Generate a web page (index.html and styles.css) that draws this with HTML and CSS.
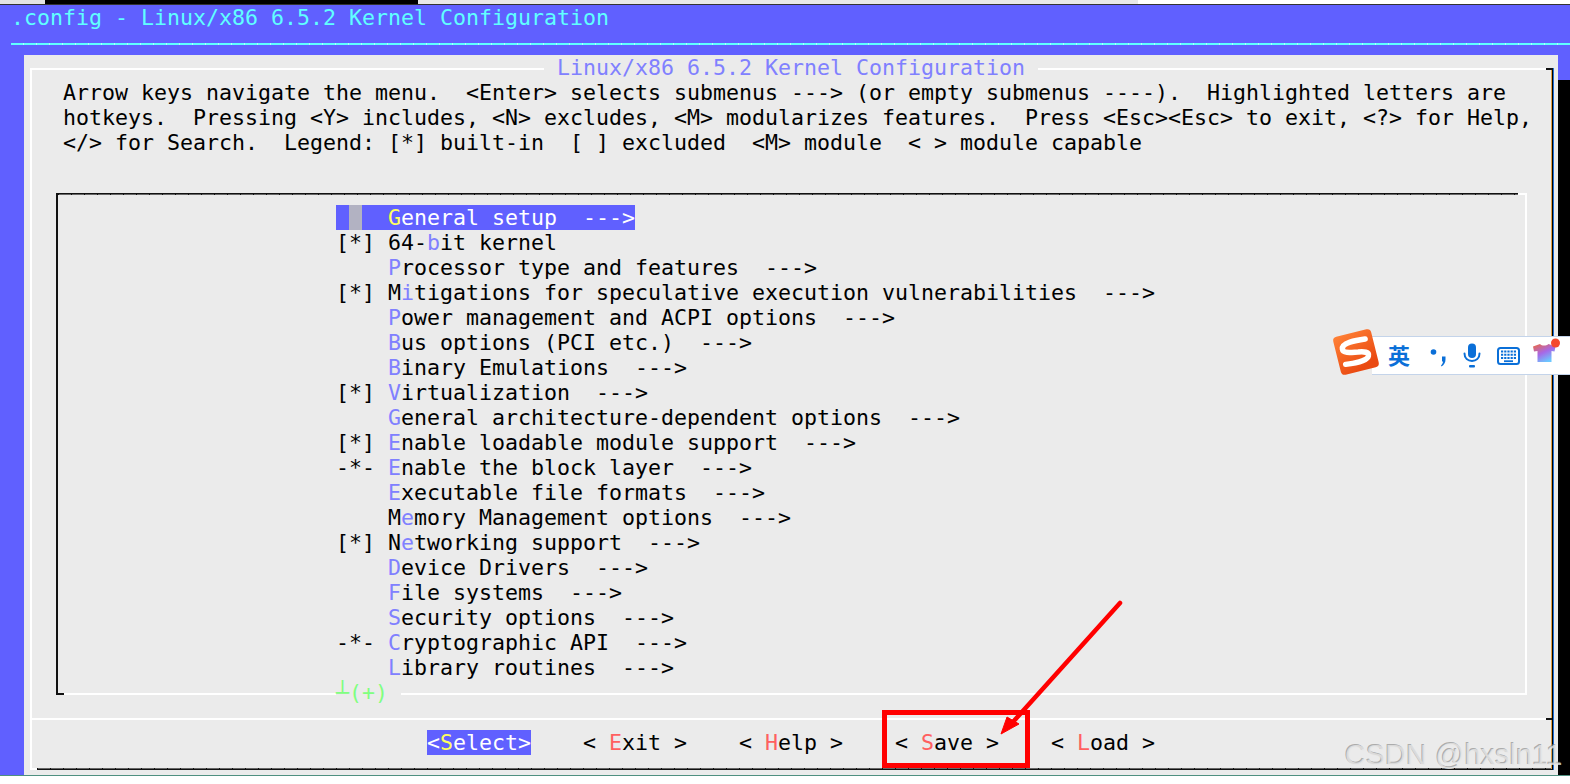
FILE: index.html
```html
<!DOCTYPE html>
<html lang="en">
<head>
<meta charset="utf-8">
<title>Linux/x86 6.5.2 Kernel Configuration</title>
<link rel="stylesheet" href="styles.css">
</head>
<body>
<div class="app">
  <div class="tabstrip">
    <div class="tab-gray-left"></div>
    <div class="tab-black"></div>
    <div class="tab-gray-right"></div>
    <div class="tab-white"></div>
  </div>
  <div class="screen">
    <div class="title">.config - Linux/x86 6.5.2 Kernel Configuration</div>
    <div class="rule"></div>
    <div class="row">
      <div class="dialog">
        <div class="frame">
          <div class="legend"> Linux/x86 6.5.2 Kernel Configuration </div>
          <div class="help">Arrow keys navigate the menu.  &lt;Enter&gt; selects submenus ---&gt; (or empty submenus ----).  Highlighted letters are
hotkeys.  Pressing &lt;Y&gt; includes, &lt;N&gt; excludes, &lt;M&gt; modularizes features.  Press &lt;Esc&gt;&lt;Esc&gt; to exit, &lt;?&gt; for Help,
&lt;/&gt; for Search.  Legend: [*] built-in  [ ] excluded  &lt;M&gt; module  &lt; &gt; module capable</div>
          <div class="menubox">
            <div class="item selected"> <span class="cursor"> </span>  <span class="hk-sel">G</span>eneral setup  ---&gt;</div>
            <div class="item">[*] 64-<span class="hk">b</span>it kernel</div>
            <div class="item">    <span class="hk">P</span>rocessor type and features  ---&gt;</div>
            <div class="item">[*] M<span class="hk">i</span>tigations for speculative execution vulnerabilities  ---&gt;</div>
            <div class="item">    <span class="hk">P</span>ower management and ACPI options  ---&gt;</div>
            <div class="item">    <span class="hk">B</span>us options (PCI etc.)  ---&gt;</div>
            <div class="item">    <span class="hk">B</span>inary Emulations  ---&gt;</div>
            <div class="item">[*] <span class="hk">V</span>irtualization  ---&gt;</div>
            <div class="item">    <span class="hk">G</span>eneral architecture-dependent options  ---&gt;</div>
            <div class="item">[*] <span class="hk">E</span>nable loadable module support  ---&gt;</div>
            <div class="item">-*- <span class="hk">E</span>nable the block layer  ---&gt;</div>
            <div class="item">    <span class="hk">E</span>xecutable file formats  ---&gt;</div>
            <div class="item">    M<span class="hk">e</span>mory Management options  ---&gt;</div>
            <div class="item">[*] N<span class="hk">e</span>tworking support  ---&gt;</div>
            <div class="item">    <span class="hk">D</span>evice Drivers  ---&gt;</div>
            <div class="item">    <span class="hk">F</span>ile systems  ---&gt;</div>
            <div class="item">    <span class="hk">S</span>ecurity options  ---&gt;</div>
            <div class="item">-*- <span class="hk">C</span>ryptographic API  ---&gt;</div>
            <div class="item">    <span class="hk">L</span>ibrary routines  ---&gt;</div>
            <div class="more">┴(+) </div>
          </div>
          <div class="separator"></div>
          <div class="buttons">
            <div class="btn btn-active">&lt;<span class="hk-sel">S</span>elect&gt;</div>
            <div class="btn">&lt; <span class="hk-btn">E</span>xit &gt;</div>
            <div class="btn">&lt; <span class="hk-btn">H</span>elp &gt;</div>
            <div class="btn">&lt; <span class="hk-btn">S</span>ave &gt;</div>
            <div class="btn">&lt; <span class="hk-btn">L</span>oad &gt;</div>
          </div>
        </div>
      </div>
      <div class="void"></div>
    </div>
  </div>
  <div class="footer"></div>

  <div class="ime">
    <svg class="ime-logo" width="52" height="52" viewBox="0 0 52 52" aria-hidden="true">
      <defs>
        <linearGradient id="logoFill" x1="0" y1="0" x2="0.4" y2="1">
          <stop offset="0" stop-color="#ff8136"/>
          <stop offset="1" stop-color="#ea4a12"/>
        </linearGradient>
      </defs>
      <g transform="rotate(-14 26 26)">
        <rect x="6.500" y="6.500" width="39" height="39" rx="4" fill="url(#logoFill)"/>
        <path d="M38 15.500C29 14.500 14 13.500 13.500 20C13 25 24 25.500 28 26.500C34 27.500 39 29 37 33C34.500 37.500 20 36.500 13 35.500" fill="none" stroke="#fff" stroke-width="5.500" stroke-linecap="round"/>
      </g>
    </svg>
    <span class="ime-lang">英</span>
    <svg class="ime-punct" width="16" height="20" viewBox="0 0 16 20" aria-hidden="true">
      <circle cx="3.500" cy="5" r="2.800" fill="#0a6fd8"/>
      <path d="M12 9.500h3.500v3C15.500 15.500 14 18 11.500 19.500L11 18.500C12.300 17.300 13 16 13 14.500h-1z" fill="#0a6fd8"/>
    </svg>
    <svg class="ime-mic" width="18" height="25" viewBox="0 0 18 25" aria-hidden="true">
      <rect x="5" y="0.500" width="8" height="14.500" rx="4" fill="#0a6fd8"/>
      <path d="M1.500 10.500C1.500 15.500 5 18 9 18s7.500-2.500 7.500-7.500" fill="none" stroke="#0a6fd8" stroke-width="2" stroke-linecap="round"/>
      <rect x="6" y="22" width="6" height="2.500" rx="1" fill="#0a6fd8"/>
    </svg>
    <svg class="ime-keys" width="23" height="18" viewBox="0 0 23 18" aria-hidden="true">
      <rect x="1" y="1" width="21" height="16" rx="2.500" fill="none" stroke="#0a6fd8" stroke-width="2"/>
      <path d="M4 4.500h15M4 7.800h15M4 11h15" stroke="#0a6fd8" stroke-width="2" stroke-dasharray="2.200 1"/>
      <path d="M7 14.200h9" stroke="#0a6fd8" stroke-width="1.800"/>
    </svg>
    <svg class="ime-shirt" width="30" height="30" viewBox="0 0 30 30" aria-hidden="true">
      <defs>
        <linearGradient id="shirtFill" x1="0" y1="0" x2="0.6" y2="1">
          <stop offset="0" stop-color="#f0683a"/>
          <stop offset="0.55" stop-color="#a668e8"/>
          <stop offset="1" stop-color="#6cc8ff"/>
        </linearGradient>
      </defs>
      <path d="M1 8.500L8 6C10 8 14 8 16.500 6L23.500 8.500L22.500 13.500L19.500 13V24H5.500V13L2 13.500z" fill="url(#shirtFill)"/>
      <circle cx="23.500" cy="5" r="4.500" fill="#f4492e"/>
    </svg>
  </div>

  <div class="callout-box"></div>
  <svg class="callout-arrow" width="140" height="150" viewBox="0 0 140 150" aria-hidden="true">
    <path d="M130 8L22 128" stroke="#ff0000" stroke-width="4.500" stroke-linecap="round" fill="none"/>
    <path d="M11 139L17 122L29 129z" fill="#ff0000" stroke="#ff0000" stroke-width="1"/>
  </svg>
  <div class="watermark">CSDN @hxsln11</div>
</div>
</body>
</html>
```
FILE: styles.css
```css
* { box-sizing: border-box; }

html, body {
  margin: 0;
  padding: 0;
  background: #fff;
}

.app {
  position: relative;
  width: 1570px;
  height: 784px;
  overflow: hidden;
  font-family: "DejaVu Sans Mono", "Liberation Mono", monospace;
  font-size: 21.6px;
  line-height: 25px;
  color: #000;
}

.title, .legend, .help, .item, .more, .btn { white-space: pre; }

/* window chrome sliver above the terminal */
.tabstrip {
  display: flex;
  height: 5px;
  border-bottom: 1px solid #333;
}
.tab-gray-left { width: 45px; background: #e4e4e4; }
.tab-black { width: 373px; background: #000; }
.tab-gray-right { width: 720px; background: #e8e8e8; }
.tab-white { flex: 1; background: #fff; }

.screen {
  height: 770px;
  background: #6060ff;
  display: flex;
  flex-direction: column;
}

.title {
  height: 25px;
  padding-left: 11px;
  color: #60ffff;
}

.rule {
  height: 2px;
  margin: 13px 0 10px 11px;
  background: repeating-linear-gradient(90deg, #60ffff 0 12px, #b0ffff 12px 13px);
}

.row {
  flex: 1;
  display: flex;
  min-height: 0;
}

.dialog {
  width: 1534px;
  margin-left: 24px;
  padding: 13px 5px 5px 6px;
  background: #ebebeb;
}

.frame {
  position: relative;
  height: 702px;
  padding-top: 10px;
  border-top: 2px solid #fff;
  border-left: 2px solid #fff;
  border-right: 1px solid #000;
  border-bottom: 1px solid #111;
  background: repeating-linear-gradient(90deg, #111 0 1px, #666 1px 13px) 5px 100% / calc(100% - 5px) 1px no-repeat;
  box-shadow: inset -1px 0 0 #e2a24a, 1px 0 0 #1f6fd6;
}
.frame::before {
  content: "";
  position: absolute;
  top: -2px;
  right: -1px;
  width: 7px;
  height: 2px;
  background: #111;
}
.frame::after {
  content: "";
  position: absolute;
  bottom: -1px;
  left: -2px;
  width: 7px;
  height: 2px;
  background: #fff;
}

.legend {
  position: absolute;
  top: -15px;
  left: 512px;
  padding: 0;
  background: #ebebeb;
  color: #8080ff;
}

.help {
  height: 75px;
  padding-left: 31px;
}

.menubox {
  position: relative;
  width: 1471px;
  height: 502px;
  margin: 38px 0 0 24px;
  padding: 11px 0 13px 278px;
  border-top: 1px solid #111;
  border-left: 2px solid #111;
  border-right: 2px solid #fff;
  border-bottom: 2px solid #fff;
  background: repeating-linear-gradient(90deg, #111 0 1px, #666 1px 13px) 0 0 / calc(100% - 7px) 1px no-repeat;
}
.menubox::before {
  content: "";
  position: absolute;
  top: -1px;
  right: -2px;
  width: 9px;
  height: 2px;
  background: #fff;
}
.menubox::after {
  content: "";
  position: absolute;
  bottom: -2px;
  left: -2px;
  width: 8px;
  height: 2px;
  background: #111;
}

.item { height: 25px; }

.selected {
  width: fit-content;
  background: #6060ff;
  color: #fff;
}

.cursor { background: #b2b2c2; }

.hk { color: #8080ff; }
.hk-sel { color: #ffff60; }
.hk-btn { color: #ff6060; }

.more {
  position: absolute;
  top: 486px;
  left: 278px;
  background: #ebebeb;
  color: #80ff80;
}

.separator {
  position: relative;
  height: 2px;
  margin-top: 23px;
  background: #fff;
}
.separator::after {
  content: "";
  position: absolute;
  top: 0;
  right: 0;
  width: 6px;
  height: 2px;
  background: #111;
}

.buttons {
  display: flex;
  gap: 52px;
  padding: 10px 0 0 395px;
}
.btn { width: 104px; height: 25px; }
.btn-active {
  background: #6060ff;
  color: #fff;
}

.void {
  flex: 1;
  margin-top: 25px;
  background: #000;
}

.footer {
  height: 1px;
  background: #4f9080;
}

/* input method toolbar floating over the terminal */
.ime {
  position: absolute;
  top: 336px;
  left: 1372px;
  width: 198px;
  height: 39px;
  display: flex;
  align-items: center;
  background: #fff;
  border-top: 1px solid #c4d4ea;
  border-bottom: 1px solid #c4d4ea;
  font-family: "Noto Sans CJK SC", sans-serif;
}
.ime-logo {
  position: absolute;
  top: -11px;
  left: -42px;
}
.ime-lang {
  margin: -4px 0 0 16px;
  font-size: 22px;
  font-weight: 700;
  line-height: 24px;
  color: #0a6fd8;
}
.ime-punct { margin: 2px 0 0 20px; }
.ime-mic { margin: 0 0 0 17px; }
.ime-keys { margin: 1px 0 0 16px; }
.ime-shirt { position: absolute; top: 1px; left: 160px; }

.callout-box {
  position: absolute;
  top: 710px;
  left: 882px;
  width: 148px;
  height: 58px;
  border: 5px solid #ff0000;
}

.callout-arrow {
  position: absolute;
  top: 595px;
  left: 990px;
}

.watermark {
  position: absolute;
  top: 737px;
  left: 1345px;
  font-family: "Liberation Sans", Arial, sans-serif;
  font-size: 29px;
  line-height: 36px;
  color: rgba(232, 232, 232, 0.8);
  text-shadow: -1px -1px 0 rgba(130, 130, 130, 0.6);
}
```
